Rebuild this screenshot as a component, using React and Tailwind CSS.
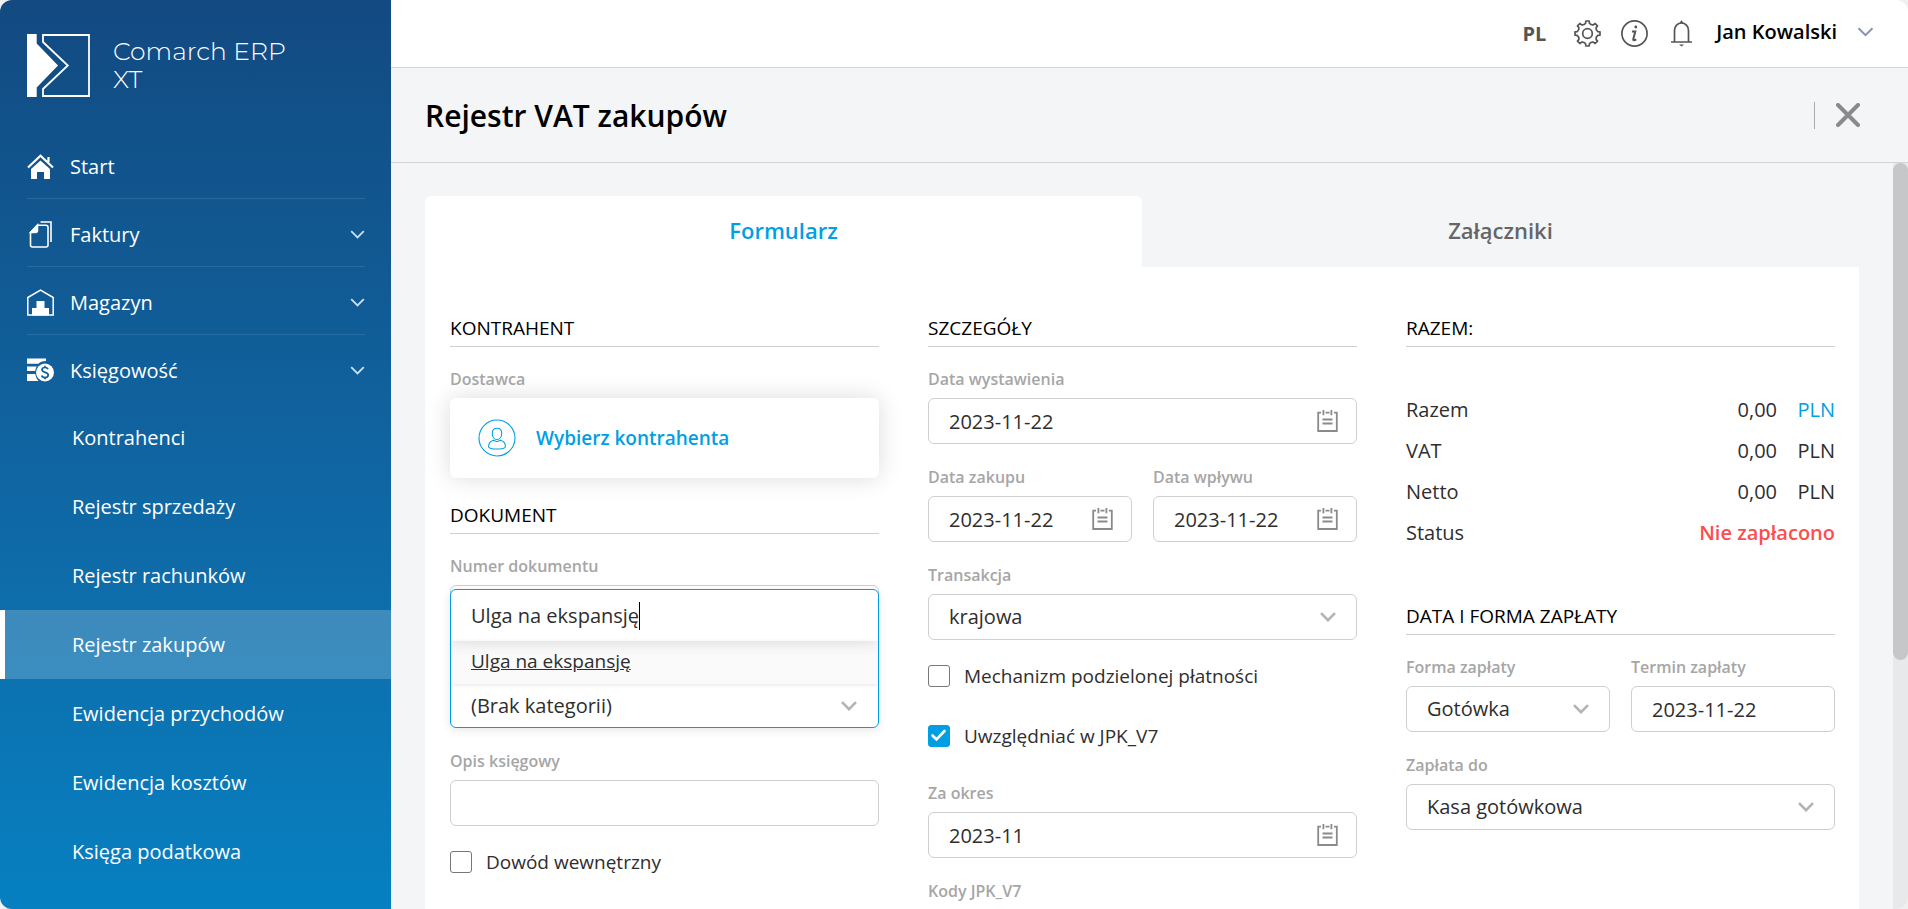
import React, { useState } from 'react'

const NAV = [
  { label: 'Start', icon: HomeIcon },
  { label: 'Faktury', icon: InvoicesIcon, expandable: true },
  { label: 'Magazyn', icon: WarehouseIcon, expandable: true },
  { label: 'Księgowość', icon: AccountingIcon, expandable: true },
]

const SUBNAV = [
  'Kontrahenci',
  'Rejestr sprzedaży',
  'Rejestr rachunków',
  'Rejestr zakupów',
  'Ewidencja przychodów',
  'Ewidencja kosztów',
  'Księga podatkowa',
]

const TOTALS = [
  { label: 'Razem', value: '0,00', link: true },
  { label: 'VAT', value: '0,00' },
  { label: 'Netto', value: '0,00' },
]

export default function App() {
  return (
    <div className="h-screen bg-[#f0f0f0] font-['Open_Sans',sans-serif] text-black">
      <div className="flex h-full overflow-hidden rounded-xl bg-[#f4f5f7]">
        <Sidebar />
        <div className="flex min-w-0 flex-1 flex-col">
          <TopBar />
          <TitleBar />
          <div className="flex min-h-0 flex-1">
            <main className="min-w-0 flex-1 overflow-hidden px-[34px] pt-[33px]">
              <PurchaseForm />
            </main>
            <div className="w-[15px] shrink-0 bg-[#e8e9eb]">
              <div className="h-2/3 rounded-full bg-[#c6c7c9]" />
            </div>
          </div>
        </div>
      </div>
    </div>
  )
}

function Sidebar() {
  return (
    <aside className="flex w-[391px] shrink-0 flex-col overflow-hidden bg-linear-to-b from-[#124a81] to-[#0680c1] text-white">
      <div className="flex h-[131px] shrink-0 items-start gap-[23px] px-[27px] pt-[34px]">
        <Logo />
        <div className="w-48 pt-[3px] font-['Montserrat','Inter',sans-serif] text-[25px] leading-7 font-light">
          Comarch ERP XT
        </div>
      </div>
      <nav>
        <ul>
          {NAV.map(({ label, icon: Icon, expandable }) => (
            <li key={label} className="group pr-[26px] pl-[27px]">
              <a
                href="#"
                className="flex h-[68px] items-center border-b border-white/10 pt-1 text-xl group-last:border-transparent"
              >
                <Icon />
                <span className="ml-4 flex-1">{label}</span>
                {expandable && <Chevron className="h-[9px] w-[15px] text-white/80" stroke={2} />}
              </a>
            </li>
          ))}
        </ul>
        <ul>
          {SUBNAV.map((label) => (
            <li key={label}>
              <a
                href="#"
                className={
                  'flex h-[69px] items-center border-l-[5px] pl-[67px] text-xl ' +
                  (label === 'Rejestr zakupów' ? 'border-white bg-white/20' : 'border-transparent')
                }
              >
                {label}
              </a>
            </li>
          ))}
        </ul>
      </nav>
    </aside>
  )
}

function TopBar() {
  return (
    <header className="flex h-[68px] shrink-0 items-center justify-end border-b border-[#d2d4d6] bg-white pr-[34px] text-[#555]">
      <button className="text-xl font-bold">PL</button>
      <button className="ml-7" aria-label="Ustawienia"><GearIcon /></button>
      <button className="ml-5" aria-label="Informacje"><InfoIcon /></button>
      <button className="ml-5" aria-label="Powiadomienia"><BellIcon /></button>
      <button className="ml-[21px] flex items-center pb-1 text-xl font-semibold text-black">
        Jan Kowalski
        <Chevron className="ml-5 h-[10px] w-[17px] text-[#8793b5]" stroke={2} />
      </button>
    </header>
  )
}

function TitleBar() {
  return (
    <div className="flex h-[95px] shrink-0 items-center border-b border-[#d2d4d6] pr-12 pl-[34px]">
      <h1 className="flex-1 text-[30px] font-semibold">Rejestr VAT zakupów</h1>
      <div className="mr-[21px] h-[27px] w-px bg-[#aaa]" />
      <button aria-label="Zamknij">
        <svg className="h-6 w-6 text-[#8a8a8a]" viewBox="0 0 24 24" fill="none" stroke="currentColor" strokeWidth="4" strokeLinecap="round">
          <path d="M2 2l20 20M22 2L2 22" />
        </svg>
      </button>
    </div>
  )
}

function PurchaseForm() {
  return (
    <>
      <div className="grid grid-cols-2 text-[22px] font-semibold">
        <button className="h-[71px] rounded-t-md bg-white pb-0.5 text-[#009fe3]">Formularz</button>
        <button className="h-[71px] pb-0.5 text-[#666]">Załączniki</button>
      </div>
      <form className="grid grid-cols-3 gap-[49px] bg-white pt-[49px] pr-6 pb-10 pl-[25px] text-[#2e2e2e]">
        <DocumentColumn />
        <DetailsColumn />
        <SummaryColumn />
      </form>
    </>
  )
}

function DocumentColumn() {
  const [query, setQuery] = useState('Ulga na ekspansję')
  return (
    <div>
      <SectionTitle>KONTRAHENT</SectionTitle>
      <div className="pt-5 pb-[25px]">
        <label htmlFor="supplier" className={LABEL}>Dostawca</label>
        <button
          id="supplier"
          type="button"
          className="flex h-20 w-full items-center gap-5 rounded-md bg-white pl-7 text-[19px] font-semibold text-[#009fe3] shadow-[0_0_24px_rgba(0,0,0,0.14)]"
        >
          <PersonIcon />
          Wybierz kontrahenta
        </button>
      </div>
      <SectionTitle>DOKUMENT</SectionTitle>
      <div className="flex flex-col gap-[21px] pt-5">
        <div className="relative pb-[97px]">
          <Field id="number" label="Numer dokumentu">
            <input id="number" className={INPUT} />
          </Field>
          {/* category picker opened over the number field */}
          <div className="absolute inset-x-0 top-[35px] bottom-0 flex flex-col overflow-hidden rounded-md border border-[#009fe3] bg-white shadow-[0_2px_10px_rgba(0,0,0,0.1)]">
            <div className="relative flex h-[51px] shrink-0 items-center pl-5 shadow-[0_2px_14px_rgba(0,0,0,0.12)]">
              <input
                aria-label="Szukaj kategorii"
                className="field-sizing-content text-xl outline-none"
                value={query}
                onChange={(e) => setQuery(e.target.value)}
              />
              <span className="h-7 w-px bg-black" />
            </div>
            <button type="button" className="h-[43px] shrink-0 bg-black/2 pb-0.5 pl-5 text-left text-[19px] underline shadow-[0_1px_4px_rgba(0,0,0,0.1)]">
              Ulga na ekspansję
            </button>
            <div className="relative flex-1">
              <select aria-label="Kategoria" className="h-full w-full appearance-none pl-5 text-xl outline-none">
                <option>(Brak kategorii)</option>
              </select>
              <SelectArrow />
            </div>
          </div>
        </div>
        <Field id="description" label="Opis księgowy">
          <input id="description" className={INPUT} />
        </Field>
        <Checkbox label="Dowód wewnętrzny" />
      </div>
    </div>
  )
}

function DetailsColumn() {
  return (
    <div>
      <SectionTitle>SZCZEGÓŁY</SectionTitle>
      <div className="flex flex-col gap-[21px] pt-5">
        <DateField id="issued" label="Data wystawienia" value="2023-11-22" />
        <div className="grid grid-cols-2 gap-[21px]">
          <DateField id="purchased" label="Data zakupu" value="2023-11-22" />
          <DateField id="received" label="Data wpływu" value="2023-11-22" />
        </div>
        <SelectField id="transaction" label="Transakcja" value="krajowa" />
        <Checkbox label="Mechanizm podzielonej płatności" />
        <Checkbox label="Uwzględniać w JPK_V7" defaultChecked />
        <DateField id="period" label="Za okres" value="2023-11" />
        <SelectField id="codes" label="Kody JPK_V7" value="" />
      </div>
    </div>
  )
}

function SummaryColumn() {
  return (
    <div>
      <SectionTitle>RAZEM:</SectionTitle>
      <table className="mt-[42px] mb-[51px] w-full text-xl">
        <tbody>
          {TOTALS.map((row) => (
            <tr key={row.label} className="h-[41px]">
              <th scope="row" className="text-left font-normal">{row.label}</th>
              <td className="text-right">{row.value}</td>
              <td className="w-[58px] text-right">
                {row.link ? <button type="button" className="text-[#009fe3]">PLN</button> : 'PLN'}
              </td>
            </tr>
          ))}
          <tr className="h-[41px]">
            <th scope="row" className="text-left font-normal">Status</th>
            <td colSpan={2} className="text-right font-semibold text-[#ff4d4d]">Nie zapłacono</td>
          </tr>
        </tbody>
      </table>
      <SectionTitle>DATA I FORMA ZAPŁATY</SectionTitle>
      <div className="flex flex-col gap-[21px] pt-5">
        <div className="grid grid-cols-2 gap-[21px]">
          <SelectField id="method" label="Forma zapłaty" value="Gotówka" />
          <Field id="due" label="Termin zapłaty">
            <input id="due" className={INPUT} defaultValue="2023-11-22" />
          </Field>
        </div>
        <SelectField id="account" label="Zapłata do" value="Kasa gotówkowa" />
      </div>
    </div>
  )
}

const LABEL = 'mb-[7px] block text-base leading-6 font-semibold text-[#a6a6a6]'
const INPUT = 'block h-[46px] w-full min-w-0 rounded-md border border-[#cfcfcf] bg-white px-5 text-xl outline-none'

function SectionTitle({ children }) {
  return <h2 className="border-b border-[#cfcfcf] pb-1.5 text-[19px] leading-6 font-medium text-black">{children}</h2>
}

function Field({ id, label, children }) {
  return (
    <div className="min-w-0">
      <label htmlFor={id} className={LABEL}>{label}</label>
      {children}
    </div>
  )
}

function DateField({ id, label, value }) {
  return (
    <Field id={id} label={label}>
      <div className="relative">
        <input id={id} className={INPUT} defaultValue={value} />
        <CalendarIcon />
      </div>
    </Field>
  )
}

function SelectField({ id, label, value }) {
  return (
    <Field id={id} label={label}>
      <div className="relative">
        <select id={id} className={INPUT + ' appearance-none'}>
          <option>{value}</option>
        </select>
        <SelectArrow />
      </div>
    </Field>
  )
}

function SelectArrow() {
  return (
    <Chevron className="pointer-events-none absolute top-1/2 right-[21px] h-[10px] w-4 -translate-y-1/2 text-[#b3b3b3]" stroke={2.6} />
  )
}

function Checkbox({ label, defaultChecked }) {
  return (
    <label className="flex h-[39px] items-start gap-3.5 pt-1 text-[19px] leading-[22px]">
      <span className="relative h-[22px] w-[22px]">
        <input
          type="checkbox"
          defaultChecked={defaultChecked}
          className="peer block h-[22px] w-[22px] appearance-none rounded-[3px] border border-[#777] bg-white checked:border-[#009fe3] checked:bg-[#009fe3]"
        />
        <svg className="pointer-events-none absolute inset-0 hidden text-white peer-checked:block" viewBox="0 0 22 22" fill="none" stroke="currentColor" strokeWidth="2.6">
          <path d="M4.5 10.5l4 4 8-8.5" strokeLinecap="round" />
        </svg>
      </span>
      {label}
    </label>
  )
}

function Chevron({ className, stroke }) {
  return (
    <svg className={className} viewBox="0 0 16 10" fill="none" stroke="currentColor" strokeWidth={stroke}>
      <path d="M1 1.2l7 7 7-7" />
    </svg>
  )
}

function CalendarIcon() {
  return (
    <svg className="pointer-events-none absolute top-3 right-[19px] h-[22px] w-[21px] text-[#8a8a8a]" viewBox="0 0 21 22" fill="none" stroke="currentColor" strokeWidth="1.8">
      <path d="M4 2.6H1.2v18.4h18.6V2.6H17M8.5 2.6h4M6.4 0v5.2M14.4 0v5.2" />
      <path d="M5.5 9.5h10M5.5 13.5h10" />
    </svg>
  )
}

function PersonIcon() {
  return (
    <svg className="h-[38px] w-[38px]" viewBox="0 0 38 38" fill="none" stroke="currentColor" strokeWidth="1.1">
      <circle cx="19" cy="19" r="18" />
      <path d="M19 9.2c3 0 4.7 1.9 4.7 5 0 3.6-2 6.3-4.7 6.3s-4.7-2.7-4.7-6.3c0-3.1 1.7-5 4.7-5z" />
      <path d="M15.6 21.2c-3 .7-5 3-5 6.200 0 1.800 3.600 2.600 8.400 2.600s8.400-.8 8.400-2.600c0-3.200-2-5.500-5-6.200-1 1-2.200 1.300-3.400 1.300s-2.400-.3-3.400-1.300z" />
    </svg>
  )
}

function Logo() {
  return (
    <svg className="h-[63px] w-[63px] shrink-0" viewBox="0 0 63 63">
      <path fill="#fff" d="M0 0h9.7v9.5L31 31.5l-21.3 22V63H0z" />
      <path fill="none" stroke="#fff" strokeWidth="1.8" d="M16 1h46v61H16v-7l24.8-23.5L16 8z" />
    </svg>
  )
}

function HomeIcon() {
  return (
    <svg className="h-[25px] w-[27px]" viewBox="0 0 27 25" fill="currentColor">
      <path d="M13.5 6.5L23 15v10h-6v-7h-7v7H4V15z" />
      <path d="M1 13.5L13.5 1.8 26 13.5M21.5 3v5" fill="none" stroke="currentColor" strokeWidth="2.2" />
    </svg>
  )
}

function InvoicesIcon() {
  return (
    <svg className="h-[27px] w-[27px]" viewBox="0 0 27 27" fill="none" stroke="currentColor" strokeWidth="1.6">
      <path d="M10.5 4.2h8.5a2 2 0 0 1 2 2V24a2 2 0 0 1-2 2H5.5a2 2 0 0 1-2-2V11.5z" />
      <path d="M10.5 4v5.5a2 2 0 0 1-2 2H3.5z" fill="currentColor" />
      <path d="M13.5 1H24v20" />
    </svg>
  )
}

function WarehouseIcon() {
  return (
    <svg className="h-[27px] w-[27px]" viewBox="0 0 27 27">
      <path d="M.8 26V8.5L13.5 1l12.7 7.5V26z" fill="none" stroke="currentColor" strokeWidth="1.5" />
      <path d="M9.5 12h8v7H22v7.5H5V19h4.5z" fill="currentColor" />
    </svg>
  )
}

function AccountingIcon() {
  return (
    <svg className="h-[25px] w-[27px]" viewBox="0 0 27 25">
      <path d="M0 .5h19v2.500c-3.500 0-6 1-7.500 2.800H0zM0 8.500h9.800c-.9 1.300-1.400 3-1.500 4.500H0zM0 16h8.300c.4 2.700 1.500 5 3.200 7H0z" fill="currentColor" />
      <circle cx="18" cy="14.500" r="9" fill="currentColor" />
      <path d="M21 11.200c-.5-1.200-1.500-1.700-3-1.700-1.800 0-3 .8-3 2.300 0 3.400 6.200 1.700 6.200 5.200 0 1.600-1.300 2.500-3.200 2.500-1.700 0-2.900-.7-3.300-2.100M18 7.800v1.800M18 19.400v1.800" fill="none" stroke="#0d619d" strokeWidth="1.7" />
    </svg>
  )
}

function GearIcon() {
  return (
    <svg className="h-[27px] w-[27px]" viewBox="0 0 27 27" fill="none" stroke="currentColor" strokeWidth="1.7" strokeLinejoin="round">
      <path d={gearPath(13.5, 12.6, 10.4, 8)} />
      <circle cx="13.5" cy="13.5" r="4.8" />
    </svg>
  )
}

function gearPath(c, tip, root, teeth) {
  const step = (Math.PI * 2) / teeth
  const at = (r, a) => (c + r * Math.sin(a)).toFixed(2) + ' ' + (c - r * Math.cos(a)).toFixed(2)
  let d = ''
  for (let i = 0; i < teeth; i++) {
    const a = i * step
    d += (i ? 'L' : 'M') + at(root, a - step * 0.24) + 'L' + at(tip, a - step * 0.17)
    d += 'L' + at(tip, a + step * 0.17) + 'L' + at(root, a + step * 0.24)
    d += 'Q' + at(root - 1.5, a + step * 0.5) + ' ' + at(root, a + step * 0.76)
  }
  return d + 'Z'
}

function InfoIcon() {
  return (
    <svg className="h-[27px] w-[27px]" viewBox="0 0 27 27" fill="none" stroke="currentColor" strokeWidth="1.7">
      <circle cx="13.5" cy="13.5" r="12.6" />
      <circle cx="14.8" cy="7" r="1.4" fill="currentColor" stroke="none" />
      <path d="M11 11.5h3.3l-2 7.5c-.3 1.3.6 1.6 3 .3" strokeWidth="2" />
    </svg>
  )
}

function BellIcon() {
  return (
    <svg className="h-[27px] w-[27px]" viewBox="0 0 27 27" fill="none" stroke="currentColor" strokeWidth="1.7">
      <path d="M3 22h21M6.5 22V10.5a7 7.5 0 0 1 14 0V22" />
      <path d="M11.5 3.3L13.5 0l2 3.3zM11 24.500h5l-2.500 2z" fill="currentColor" stroke="none" />
    </svg>
  )
}
